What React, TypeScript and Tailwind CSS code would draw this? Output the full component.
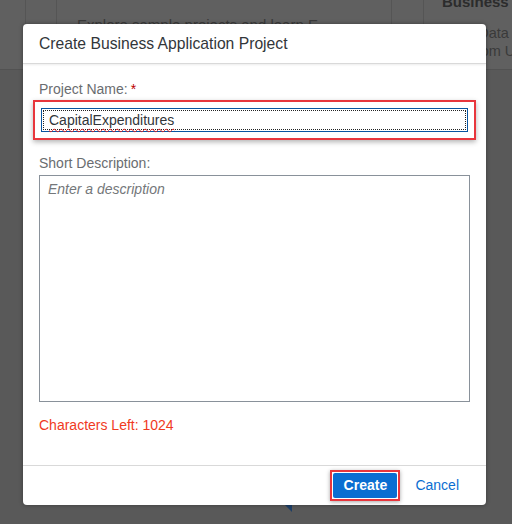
import React from "react";

export default function App() {
  return (
    <div
      className="relative w-[512px] h-[524px] overflow-hidden bg-[#595959]"
      style={{ fontFamily: '"Liberation Sans", Arial, sans-serif' }}
    >
      {/* dimmed page behind the dialog */}
      <div className="flex h-[70px] border-b border-[#525252] bg-[#606060]">
        <div className="w-[26px] shrink-0 border-r border-[#555]" />
        <div className="w-[31px] shrink-0 border-r border-[#555]" />
        <div className="w-[335px] shrink-0 border-r border-[#555] pl-[20px] pt-[14px] overflow-hidden">
          <div className="text-[15px] text-[#3a3a3a] whitespace-nowrap">Explore sample projects and learn E</div>
        </div>
        <div className="w-[32px] shrink-0 border-r border-[#555]" />
        <div className="flex-1 min-w-0 overflow-hidden pl-[18px] -mt-[9px]">
          <div className="text-[15px] font-bold text-[#2c2c2c] whitespace-nowrap">Business A</div>
          <div className="mt-[10px] text-[14.5px] leading-[18px] text-[#3a3a3a] whitespace-nowrap">Build Data</div>
          <div className="text-[14.5px] leading-[18px] text-[#3a3a3a] whitespace-nowrap">App from UI</div>
        </div>
      </div>
      <div className="absolute left-[280px] top-[500px] h-0 w-0 border-l-[12px] border-t-[12px] border-l-transparent border-t-[#1d3e66]" />

      {/* dialog */}
      <div className="absolute left-[23px] top-[24px] w-[463px] h-[481px] flex flex-col bg-white rounded-[4px] shadow-[0_0_4px_rgba(0,0,0,0.35)]">
        <div className="h-[40px] flex items-center px-[16px] border-b border-[#d9d9d9] shadow-[0_1px_2px_rgba(0,0,0,0.08)]">
          <span className="text-[15.7px] text-[#32363a]">Create Business Application Project</span>
        </div>

        <div className="flex-1 flex flex-col px-[16px] pt-[17px]">
          <div className="text-[14px] text-[#6a6d70] leading-[16px]">
            Project Name:<span className="ml-[3px] text-[#bb0000]">*</span>
          </div>
          <div className="mt-[3px] -mx-[6px] p-[6px] border-[2px] border-[#e8363c] shadow-[0_2px_5px_rgba(0,0,0,0.3)]">
            <div className="h-[24px] border border-[#0854a0] flex items-center p-[1px]">
              <div className="h-full w-full border border-dotted border-[#222] flex items-center pl-[5px]">
                <span className="text-[14px] text-[#32363a] underline decoration-wavy decoration-[#e02020] decoration-[1px] underline-offset-[3px]">
                  CapitalExpenditures
                </span>
              </div>
            </div>
          </div>

          <div className="mt-[15px] text-[14px] text-[#6a6d70] leading-[16px]">Short Description:</div>
          <div className="mt-[4px] h-[227px] border border-[#89919a] px-[8px] pt-[5px]">
            <span className="block text-[14px] leading-[16px] italic text-[#74777a]">Enter a description</span>
          </div>

          <div className="mt-[15px] text-[14px] text-[#f03a1e] leading-[16px]">Characters Left: 1024</div>
        </div>

        <div className="h-[40px] border-t border-[#d9d9d9] flex items-center justify-end pr-[27px] gap-[15px]">
          <div className="p-[1px] border-[2px] border-[#e8363c] shadow-[0_1px_4px_rgba(0,0,0,0.35)]">
            <button className="block h-[25px] w-[64px] rounded-[2px] bg-[#0a6ed1] text-white text-[14px] font-bold">Create</button>
          </div>
          <span className="text-[14px] text-[#0a6ed1]">Cancel</span>
        </div>
      </div>
    </div>
  );
}
